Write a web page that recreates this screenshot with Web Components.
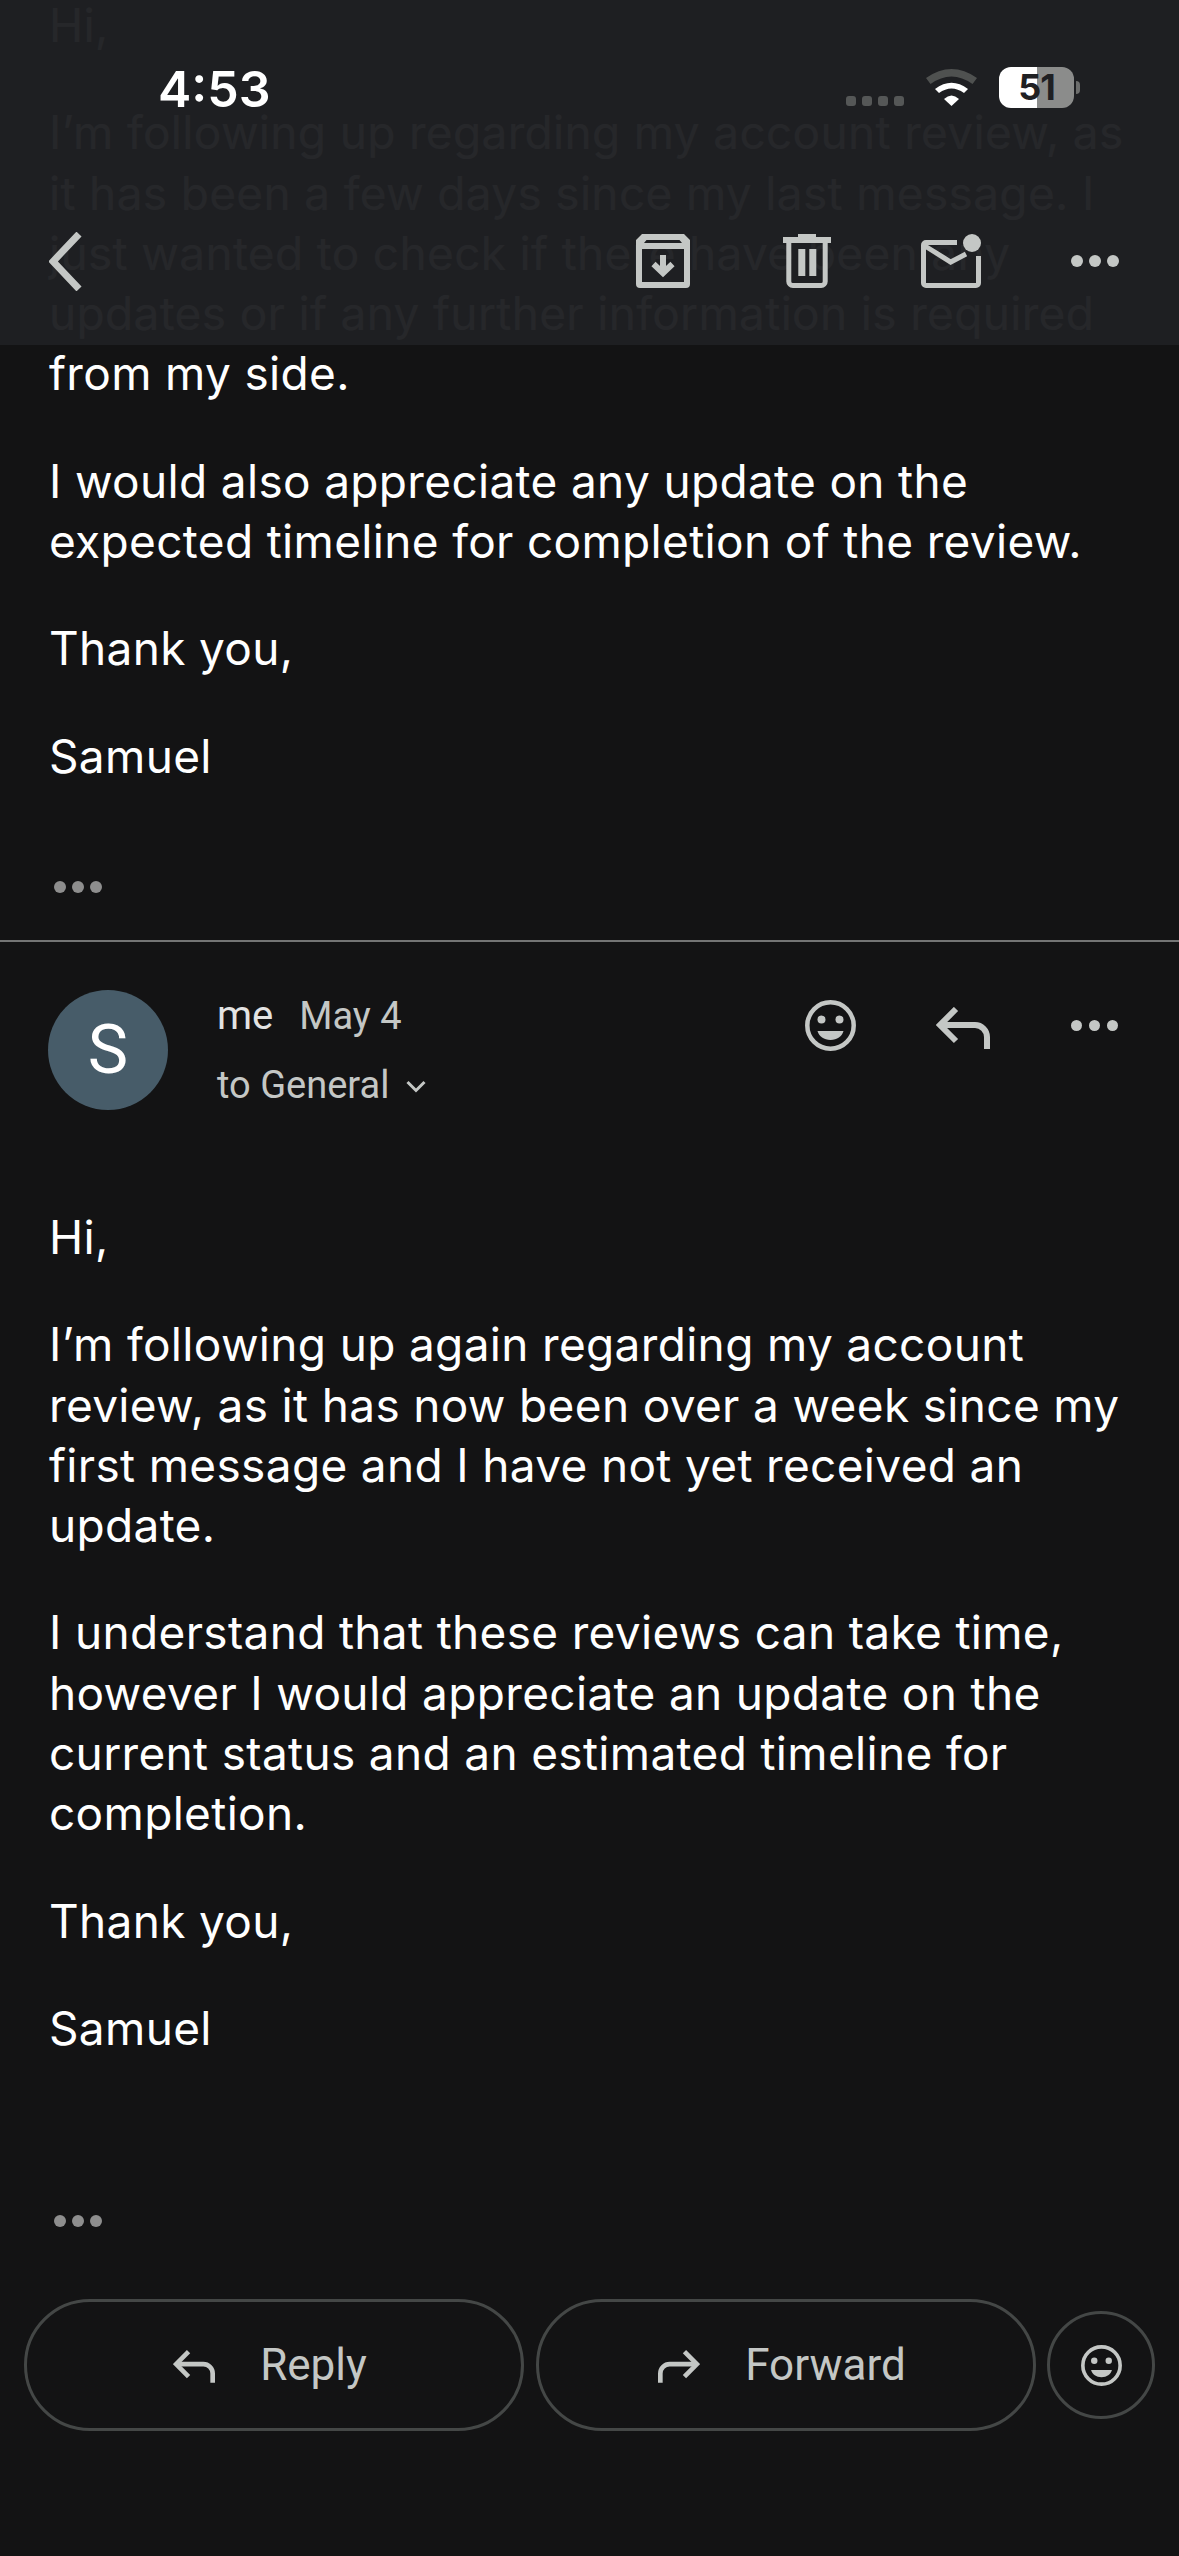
<!DOCTYPE html>
<html>
<head>
<meta charset="utf-8">
<title>Mail thread</title>
<style>
  html, body { margin: 0; padding: 0; background: #131314; }
</style>
</head>
<body>
<mail-thread>
  <top-bar slot="top"></top-bar>
  <mail-body class="tail">
    <p>Hi,</p>
    <p>I’m following up regarding my account review, as it has been a few days since my last message. I just wanted to check if there have been any updates or if any further information is required from my side.</p>
    <p>I would also appreciate any update on the expected timeline for completion of the review.</p>
    <p>Thank you,</p>
    <p>Samuel</p>
  </mail-body>
  <more-dots style="--top:95px;--bottom:47px"></more-dots>
  <mail-header name="me" date="May 4" to="to General" initial="S"></mail-header>
  <mail-body>
    <p>Hi,</p>
    <p>I’m following up again regarding my account review, as it has now been over a week since my first message and I have not yet received an update.</p>
    <p>I understand that these reviews can take time, however I would appreciate an update on the current status and an estimated timeline for completion.</p>
    <p>Thank you,</p>
    <p>Samuel</p>
  </mail-body>
  <more-dots style="--top:157px;--bottom:72px"></more-dots>
  <action-row></action-row>
</mail-thread>

<script>
const ICON_COLOR = '#c4c7c5';

const ICONS = {
  archive: `<svg width="54" height="54" viewBox="0 0 54 54" fill="none">
    <path fill="${ICON_COLOR}" fill-rule="evenodd" d="M6 0 H48 L54 6 V50 a4 4 0 0 1 -4 4 H4 a4 4 0 0 1 -4 -4 V6 Z M8 9 L10.5 6 H43.5 L46 9 Z M6 15 H48 V48 H6 Z"/>
    <path d="M27 21 V38" stroke="${ICON_COLOR}" stroke-width="6"/>
    <path d="M17.5 30 L27 39 L36.5 30" stroke="${ICON_COLOR}" stroke-width="6"/>
  </svg>`,
  trash: `<svg width="48" height="54" viewBox="0 0 48 54" fill="none" stroke="${ICON_COLOR}" stroke-width="5">
    <path d="M15 0 H33 V3 H48 V9 H0 V3 H15 Z" fill="${ICON_COLOR}" stroke="none"/>
    <path d="M5.8 8 V47.5 a4 4 0 0 0 4 4 H38.2 a4 4 0 0 0 4 -4 V8"/>
    <path d="M18.8 15 V42 M29.8 15 V42" stroke-width="7"/>
  </svg>`,
  mail: `<svg width="60" height="54" viewBox="0 0 60 54" fill="none" stroke="${ICON_COLOR}" stroke-width="5">
    <path d="M36 8.5 H5 a2.5 2.5 0 0 0 -2.5 2.5 V49 a2.5 2.5 0 0 0 2.5 2.5 H55 a2.5 2.5 0 0 0 2.5 -2.5 V22"/>
    <path d="M4 12 L29.7 28 L45 20"/>
    <circle cx="51" cy="9" r="9" fill="${ICON_COLOR}" stroke="none"/>
  </svg>`,
  smile: `<svg viewBox="0 0 51 51" fill="none" stroke="${ICON_COLOR}" stroke-width="4.5">
    <circle cx="25.5" cy="25.5" r="23.2"/>
    <circle cx="16.5" cy="19.5" r="4" fill="${ICON_COLOR}" stroke="none"/>
    <circle cx="34.5" cy="19.5" r="4" fill="${ICON_COLOR}" stroke="none"/>
    <path d="M12.5 31 H38.5 C37 36.5 32 40 25.5 40 C19 40 14 36.5 12.5 31 Z" fill="${ICON_COLOR}" stroke="none"/>
  </svg>`,
  reply: `<svg viewBox="0 0 54 42" fill="none" stroke="${ICON_COLOR}" stroke-width="6">
    <path d="M20 2 L4 18 L20 34"/>
    <path d="M4 18 H39 a12 12 0 0 1 12 12 V42"/>
  </svg>`,
  forward: `<svg viewBox="0 0 54 42" fill="none" stroke="${ICON_COLOR}" stroke-width="6">
    <path d="M34 2 L50 18 L34 34"/>
    <path d="M50 18 H15 a12 12 0 0 0 -12 12 V42"/>
  </svg>`
};

class MailThread extends HTMLElement {
  connectedCallback() {
    this.attachShadow({ mode: 'open' });
    this.shadowRoot.innerHTML = `
      <style>
        :host {
          display: block;
          position: relative;
          width: 1179px;
          height: 2556px;
          overflow: hidden;
          background: #131314;
        }
        .flow { margin-top: -5px; }
      </style>
      <slot name="top"></slot>
      <div class="flow"><slot></slot></div>
    `;
  }
}

class TopBar extends HTMLElement {
  connectedCallback() {
    this.attachShadow({ mode: 'open' });
    this.shadowRoot.innerHTML = `
      <style>
        :host {
          display: block;
          position: absolute;
          top: 0;
          left: 0;
          right: 0;
          height: 345px;
          z-index: 5;
          background: rgba(31, 32, 35, 0.97);
        }
        .status {
          display: flex;
          align-items: flex-start;
          height: 231px;
          box-sizing: border-box;
          padding: 0 105px 0 158px;
        }
        .time {
          font: 600 50px/62px Inter, sans-serif;
          color: #fff;
          margin-top: 58px;
          flex: 1;
        }
        .signal {
          display: flex;
          gap: 6px;
          margin-top: 96px;
        }
        .signal i {
          width: 10px;
          height: 10px;
          border-radius: 3px;
          background: #555757;
        }
        .wifi { margin: 69px 22px 0 22px; }
        .battery {
          margin-top: 67px;
          position: relative;
          width: 75px;
          height: 41px;
          border-radius: 12px;
          background: linear-gradient(90deg, #fff 0 38px, #8b8c8b 38px);
          color: #1f2023;
          font: 700 36px/41px Inter, sans-serif;
          text-align: center;
          letter-spacing: -1px;
        }
        .battery::after {
          content: "";
          position: absolute;
          left: 77px;
          top: 14px;
          width: 4px;
          height: 13px;
          border-radius: 0 7px 7px 0;
          background: #6d6e6d;
        }
        .tools {
          display: flex;
          align-items: center;
          height: 60px;
          padding: 0 60px 0 49px;
        }
        .back { flex: 1; display: flex; }
        .tools .icon { display: flex; }
        .archive { margin-right: 93px; }
        .trash { margin-right: 90px; }
        .mail { margin-right: 90px; }
        .dots { display: flex; gap: 6px; }
        .dots i { width: 12px; height: 12px; border-radius: 50%; background: ${ICON_COLOR}; }
      </style>
      <div class="status">
        <span class="time">4:53</span>
        <span class="signal"><i></i><i></i><i></i><i></i></span>
        <svg class="wifi" width="51" height="37" viewBox="0 0 51 37">
          <path d="M0 9 Q25.5 -9 51 9 L46.5 15 Q25.5 0 4.5 15 Z" fill="#4f5150"/>
          <path d="M9 20 Q25.5 7.5 42 20 L38 24 Q25.5 15 13 24 Z" fill="#fff"/>
          <path d="M18 30 Q25.5 23 33 30 L25.5 37 Z" fill="#fff"/>
        </svg>
        <span class="battery">51</span>
      </div>
      <div class="tools">
        <span class="back">
          <svg width="33" height="59" viewBox="0 0 33 59" fill="none" stroke="${ICON_COLOR}" stroke-width="7">
            <path d="M30 2 L4 29.5 L30 57"/>
          </svg>
        </span>
        <span class="icon archive">${ICONS.archive}</span>
        <span class="icon trash">${ICONS.trash}</span>
        <span class="icon mail">${ICONS.mail}</span>
        <span class="dots"><i></i><i></i><i></i></span>
      </div>
    `;
  }
}

class MailBody extends HTMLElement {
  connectedCallback() {
    this.attachShadow({ mode: 'open' });
    this.shadowRoot.innerHTML = `
      <style>
        :host {
          display: block;
          padding: 0 49px;
          font: 400 46px/60.3px Inter, sans-serif;
          letter-spacing: 0.33px;
          color: #fff;
        }
        ::slotted(p) {
          margin: 0 0 47px;
        }
        ::slotted(p:last-child) { margin-bottom: 0; }
      </style>
      <slot></slot>
    `;
  }
}

class MoreDots extends HTMLElement {
  connectedCallback() {
    this.attachShadow({ mode: 'open' });
    this.shadowRoot.innerHTML = `
      <style>
        :host {
          display: flex;
          gap: 6px;
          padding: var(--top) 0 var(--bottom) 54px;
        }
        i { width: 12px; height: 12px; border-radius: 50%; background: #8e8e8e; }
      </style>
      <i></i><i></i><i></i>
    `;
  }
}

class MailHeader extends HTMLElement {
  connectedCallback() {
    this.attachShadow({ mode: 'open' });
    this.shadowRoot.innerHTML = `
      <style>
        :host {
          display: flex;
          align-items: flex-start;
          border-top: 2px solid #747575;
          padding: 48px 61px 97px 48px;
          font-family: Roboto, sans-serif;
        }
        .avatar {
          width: 120px;
          height: 120px;
          border-radius: 50%;
          background: #475c69;
          color: #fff;
          font: 400 68px/120px Roboto, sans-serif;
          text-align: center;
          flex: none;
        }
        .info { flex: 1; margin-left: 49px; }
        .line1 { display: flex; align-items: baseline; height: 50px; margin-top: 1px; }
        .name { font-size: 40px; line-height: 50px; color: #e3e3e3; }
        .date { font-size: 38px; line-height: 50px; color: #c4c7c5; margin-left: 26px; }
        .line2 {
          display: flex;
          align-items: center;
          margin-top: 19px;
          font-size: 38px;
          line-height: 50px;
          color: #c4c7c5;
        }
        .line2 svg { margin-left: 17px; margin-top: 4px; }
        .acts { display: flex; align-items: center; margin-top: 11px; height: 50px; }
        .smile { width: 51px; height: 51px; margin-right: 80px; display: flex; }
        .reply { width: 54px; height: 42px; margin-right: 81px; display: flex; margin-top: 4px; }
        .dots { display: flex; gap: 7px; }
        .dots i { width: 11px; height: 11px; border-radius: 50%; background: ${ICON_COLOR}; }
      </style>
      <div class="avatar">${this.getAttribute('initial')}</div>
      <div class="info">
        <div class="line1">
          <span class="name">${this.getAttribute('name')}</span>
          <span class="date">${this.getAttribute('date')}</span>
        </div>
        <div class="line2">
          <span>${this.getAttribute('to')}</span>
          <svg width="20" height="13" viewBox="0 0 20 13" fill="none" stroke="${ICON_COLOR}" stroke-width="3"><path d="M1.5 2 L10 10.5 L18.5 2"/></svg>
        </div>
      </div>
      <div class="acts">
        <span class="smile">${ICONS.smile}</span>
        <span class="reply">${ICONS.reply}</span>
        <span class="dots"><i></i><i></i><i></i></span>
      </div>
    `;
  }
}

class ActionButton extends HTMLElement {
  connectedCallback() {
    this.attachShadow({ mode: 'open' });
    this.shadowRoot.innerHTML = `
      <style>
        :host {
          display: flex;
          align-items: center;
          justify-content: center;
          box-sizing: border-box;
          width: 500px;
          height: 132px;
          padding-right: 8px;
          border: 3px solid #444746;
          border-radius: 66px;
          color: ${ICON_COLOR};
          font: 400 44px/1 Roboto, sans-serif;
          gap: 45px;
        }
        .glyph { width: 42px; height: 33px; display: flex; margin-top: 2px; }
      </style>
      <span class="glyph">${ICONS[this.getAttribute('icon')]}</span>
      <slot></slot>
    `;
  }
}

class ActionRow extends HTMLElement {
  connectedCallback() {
    this.attachShadow({ mode: 'open' });
    this.shadowRoot.innerHTML = `
      <style>
        :host {
          display: flex;
          align-items: center;
          gap: 12px;
          padding-left: 24px;
        }
        .round {
          box-sizing: border-box;
          width: 108px;
          height: 108px;
          border: 3px solid #444746;
          border-radius: 50%;
          display: flex;
          align-items: center;
          justify-content: center;
          margin-left: -1px;
        }
        .round span { width: 41px; height: 41px; display: flex; }
      </style>
      <action-button icon="reply">Reply</action-button>
      <action-button icon="forward">Forward</action-button>
      <div class="round"><span>${ICONS.smile}</span></div>
    `;
  }
}

customElements.define('mail-thread', MailThread);
customElements.define('top-bar', TopBar);
customElements.define('mail-body', MailBody);
customElements.define('more-dots', MoreDots);
customElements.define('mail-header', MailHeader);
customElements.define('action-button', ActionButton);
customElements.define('action-row', ActionRow);
</script>
</body>
</html>
